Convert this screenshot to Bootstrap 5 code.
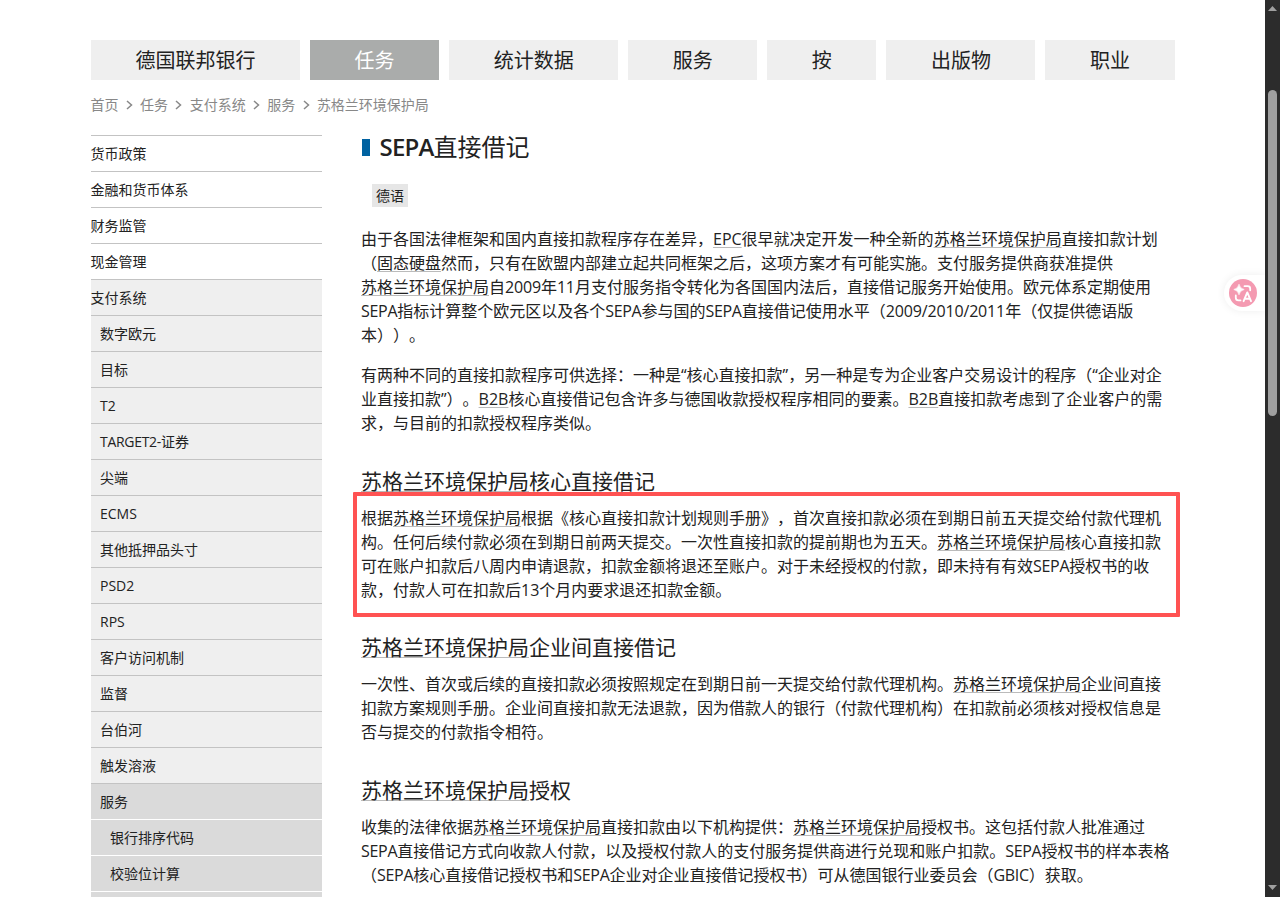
<!DOCTYPE html>
<html lang="zh-CN">
<head>
<meta charset="utf-8">
<meta name="viewport" content="width=device-width, initial-scale=1">
<title>SEPA直接借记</title>
<link rel="stylesheet" href="https://cdn.jsdelivr.net/npm/bootstrap@5.3.0/dist/css/bootstrap.min.css">
<style>
  body { font-family: "Open Sans", "Noto Sans CJK SC", sans-serif; font-size: 16px; line-height: 24px; color: #222; text-spacing-trim: space-all; }
  .viewport { height: 897px; }
  .page { width: 1084px; margin-left: 91px; padding-top: 40px; }
  .topnav { gap: 10px; height: 40px; width: 1083.55px; }
  .topnav .nav-link { background: #efefef; color: #222; font-size: 20px; height: 40px; line-height: 42px; padding: 0; }
  .topnav .nav-link.active { background: #aaacab; color: #fff; }
  .crumbs { font-size: 14px; line-height: 20px; color: #888; margin: 15px 0 0 -.5px; gap: 7.3px; }
  .crumbs svg { width: 7px; height: 10px; }
  .columns { margin-top: 20px; gap: 39.5px; }
  .sidenav { width: 231px; }
  .sidenav a { display: block; height: 36px; border-top: 1px solid #c3c3c3; font-size: 14px; line-height: 36px; color: #222; text-decoration: none; text-indent: -.5px; }
  .sidenav .sub { background: #efefef; }
  .sidenav .deep { background: #dadada; }
  .sidenav .light-rule { border-top-color: #fff; }
  .in1 { padding-left: 9.5px; }
  .in2 { padding-left: 19.5px; }
  .article { width: 813px; white-space: nowrap; }
  .article h1 { font-size: 24px; line-height: 26px; margin: -1px 0 0; gap: 10px; font-weight: 400; }
  .article h1::before { content: ""; width: 8px; height: 17px; background: #0062a1; }
  .article h1 b { font-weight: 600; letter-spacing: -.8px; }
  .lang { background: #e6e6e6; font-size: 14px; line-height: 23px; margin: 24px 0 20px 10.5px; padding: 0 4px; }
  .article p { margin: 0 0 16px -.5px; }
  .article h2 { font-size: 21px; line-height: 28px; font-weight: 400; margin: 32px 0 11px -.5px; }
  .article .after-mark { margin-top: 31px; }
  .article abbr { text-decoration: underline solid #bbb 1px; text-underline-offset: 2px; cursor: help; }
  .lt { letter-spacing: -.3px; }
  .yr { letter-spacing: -.15px; }
  .marked { inset: -14px -5px -15px -8.5px; border: 4px solid #ff5252; border-radius: 1px; }
  .scroller { width: 15px; background: #2c2c2c; padding: 6px 3px; }
  .thumb { height: 326px; margin-top: 79px; border-radius: 5px; background: #9f9f9f; }
  .translate { right: 15px; top: 275px; width: 41px; height: 36px; padding: 4px 5px; background: #fff; border-radius: 18px 0 0 18px; box-shadow: 0 0 8px rgba(0,0,0,.07); }
</style>
</head>
<body class="bg-white overflow-hidden">
<div class="viewport d-flex overflow-hidden position-relative">
  <div class="flex-grow-1">
    <div class="page">
      <nav class="topnav nav flex-nowrap">
        <a class="nav-link flex-fill" href="#"><span class="d-block text-center px-4 mx-3">德国联邦银行</span></a>
        <a class="nav-link flex-fill active" href="#"><span class="d-block text-center px-4 mx-3">任务</span></a>
        <a class="nav-link flex-fill" href="#"><span class="d-block text-center px-4 mx-3">统计数据</span></a>
        <a class="nav-link flex-fill" href="#"><span class="d-block text-center px-4 mx-3">服务</span></a>
        <a class="nav-link flex-fill" href="#"><span class="d-block text-center px-4 mx-3">按</span></a>
        <a class="nav-link flex-fill" href="#"><span class="d-block text-center px-4 mx-3">出版物</span></a>
        <a class="nav-link flex-fill" href="#"><span class="d-block text-center px-4 mx-3">职业</span></a>
      </nav>
      <div class="crumbs d-flex align-items-center">
        <span>首页</span><svg viewBox="0 0 7 10"><path d="M1 1l4.500 4L1 9" fill="none" stroke="#888" stroke-width="1.500"/></svg>
        <span>任务</span><svg viewBox="0 0 7 10"><path d="M1 1l4.500 4L1 9" fill="none" stroke="#888" stroke-width="1.500"/></svg>
        <span>支付系统</span><svg viewBox="0 0 7 10"><path d="M1 1l4.500 4L1 9" fill="none" stroke="#888" stroke-width="1.500"/></svg>
        <span>服务</span><svg viewBox="0 0 7 10"><path d="M1 1l4.500 4L1 9" fill="none" stroke="#888" stroke-width="1.500"/></svg>
        <span>苏格兰环境保护局</span>
      </div>
      <div class="columns d-flex">
        <nav class="sidenav flex-shrink-0">
          <a href="#">货币政策</a>
          <a href="#">金融和货币体系</a>
          <a href="#">财务监管</a>
          <a href="#">现金管理</a>
          <a href="#" class="sub">支付系统</a>
          <a href="#" class="sub in1">数字欧元</a>
          <a href="#" class="sub in1">目标</a>
          <a href="#" class="sub in1">T2</a>
          <a href="#" class="sub in1"><span class="lt">TARGET2-</span>证券</a>
          <a href="#" class="sub in1">尖端</a>
          <a href="#" class="sub in1">ECMS</a>
          <a href="#" class="sub in1">其他抵押品头寸</a>
          <a href="#" class="sub in1">PSD2</a>
          <a href="#" class="sub in1">RPS</a>
          <a href="#" class="sub in1">客户访问机制</a>
          <a href="#" class="sub in1">监督</a>
          <a href="#" class="sub in1">台伯河</a>
          <a href="#" class="sub in1">触发溶液</a>
          <a href="#" class="deep in1">服务</a>
          <a href="#" class="deep light-rule in2">银行排序代码</a>
          <a href="#" class="deep light-rule in2">校验位计算</a>
          <a href="#" class="deep light-rule in2" aria-hidden="true"></a>
        </nav>
        <main class="article">
          <h1 class="d-flex align-items-center"><span><b>SEPA</b>直接借记</span></h1>
          <div class="d-flex"><span class="lang">德语</span></div>
          <p>由于各国法律框架和国内直接扣款程序存在差异，<abbr>EPC</abbr>很早就决定开发一种全新的<abbr>苏格兰环境保护局</abbr>直接扣款计划<br>（<abbr>固态硬盘</abbr>然而，只有在欧盟内部建立起共同框架之后，这项方案才有可能实施。支付服务提供商获准提供<br><abbr>苏格兰环境保护局</abbr>自<span class="yr">2009年11</span>月支付服务指令转化为各国国内法后，直接借记服务开始使用。欧元体系定期使用<br><span class="lt">SEPA</span>指标计算整个欧元区以及各个<span class="lt">SEPA</span>参与国的<span class="lt">SEPA</span>直接借记使用水平（<span class="yr">2009/2010/2011</span>年（仅提供德语版<br>本））。</p>
          <p>有两种不同的直接扣款程序可供选择：一种是“核心直接扣款”，另一种是专为企业客户交易设计的程序（“企业对企<br>业直接扣款”）。<abbr>B2B</abbr>核心直接借记包含许多与德国收款授权程序相同的要素。<abbr>B2B</abbr>直接扣款考虑到了企业客户的需<br>求，与目前的扣款授权程序类似。</p>
          <h2><abbr>苏格兰环境保护局</abbr>核心直接借记</h2>
          <div class="position-relative">
            <p>根据<abbr>苏格兰环境保护局</abbr>根据《核心直接扣款计划规则手册》，首次直接扣款必须在到期日前五天提交给付款代理机<br>构。任何后续付款必须在到期日前两天提交。一次性直接扣款的提前期也为五天。<abbr>苏格兰环境保护局</abbr>核心直接扣款<br>可在账户扣款后八周内申请退款，扣款金额将退还至账户。对于未经授权的付款，即未持有有效<span class="lt">SEPA</span>授权书的收<br>款，付款人可在扣款后13个月内要求退还扣款金额。</p>
            <div class="marked position-absolute"></div>
          </div>
          <h2 class="after-mark"><abbr>苏格兰环境保护局</abbr>企业间直接借记</h2>
          <p>一次性、首次或后续的直接扣款必须按照规定在到期日前一天提交给付款代理机构。<abbr>苏格兰环境保护局</abbr>企业间直接<br>扣款方案规则手册。企业间直接扣款无法退款，因为借款人的银行（付款代理机构）在扣款前必须核对授权信息是<br>否与提交的付款指令相符。</p>
          <h2><abbr>苏格兰环境保护局</abbr>授权</h2>
          <p>收集的法律依据<abbr>苏格兰环境保护局</abbr>直接扣款由以下机构提供：<abbr>苏格兰环境保护局</abbr>授权书。这包括付款人批准通过<br><span class="lt">SEPA</span>直接借记方式向收款人付款，以及授权付款人的支付服务提供商进行兑现和账户扣款。<span class="lt">SEPA</span>授权书的样本表格<br>（<span class="lt">SEPA</span>核心直接借记授权书和<span class="lt">SEPA</span>企业对企业直接借记授权书）可从德国银行业委员会（<span class="lt">GBIC</span>）获取。</p>
        </main>
      </div>
    </div>
  </div>
  <div class="translate position-absolute">
    <svg class="d-block" width="28" height="28" viewBox="0 0 28 28">
      <circle cx="14" cy="14" r="14" fill="#f49ab1"/>
      <path d="M10 5.200Q10.900 9.600 15.200 10.500Q10.900 11.400 10 15.800Q9.100 11.400 4.800 10.500Q9.100 9.600 10 5.200Z" fill="#fff" stroke="#fff" stroke-width=".600"/>
      <path d="M15.500 7.200h3.200q2.500 0 2.500 2.500v1.600M6.800 16.500v2.200q0 2.700 2.700 2.700h2" fill="none" stroke="#fff" stroke-width="1.800" stroke-linecap="round"/>
      <path d="M14.600 22.200l3.700-8.800l3.700 8.800M15.900 19.700h4.800" fill="none" stroke="#fff" stroke-width="1.900" stroke-linecap="round" stroke-linejoin="round"/>
    </svg>
  </div>
  <div class="scroller d-flex flex-column flex-shrink-0">
    <svg class="d-block" width="9" height="5" viewBox="0 0 9 5"><path d="M4.500 0L9 5H0z" fill="#9f9f9f"/></svg>
    <div class="thumb"></div>
    <svg class="d-block mt-auto" width="9" height="6" viewBox="0 0 9 6"><path d="M4.500 5L9 0H0z" fill="#9f9f9f"/></svg>
  </div>
</div>
<script src="https://cdn.jsdelivr.net/npm/bootstrap@5.3.0/dist/js/bootstrap.bundle.min.js"></script>
</body>
</html>
